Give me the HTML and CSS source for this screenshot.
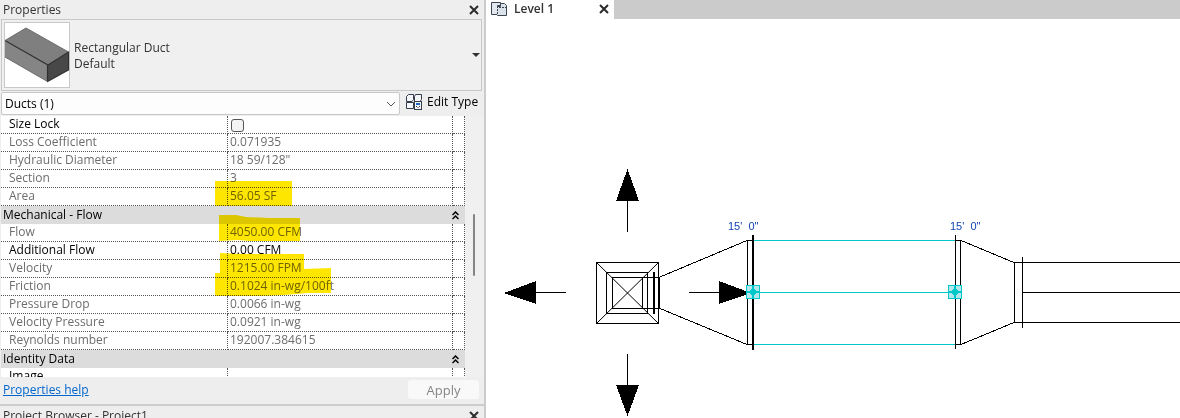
FILE: index.html
```
<!DOCTYPE html>
<html lang="en">
<head>
<meta charset="utf-8">
<title>Level 1 - Properties</title>
<link rel="stylesheet" href="styles.css">
</head>
<body>
<div class="app">
  <aside class="dock">
    <section class="properties">
      <header class="titlebar">
        <h2 class="title">Properties</h2>
        <button class="close" type="button" aria-label="Close Properties"><svg width="10" height="10" viewBox="0 0 10 10"><path class="cross" d="M1 1L9 9M9 1L1 9"/></svg></button>
      </header>

      <button class="type-selector" type="button">
        <svg class="thumb" width="66" height="66" viewBox="0 0 66 66" aria-hidden="true">
          <rect x="0.500" y="0.500" width="65" height="65" fill="#fff" stroke="#c8c8c8"/>
          <path fill="#7f7f7f" d="M22 6L64.500 30L44 43L1 18.500Z"/>
          <path fill="#858585" d="M1 18.500L44 43L43.500 59.500L1 35Z"/>
          <path fill="#484848" d="M44 43L64.500 30V48L43.500 59.500Z"/>
          <path fill="none" stroke="#303030" stroke-width="1.200" d="M1 18.500L44 43L64.500 30V48L43.500 59.500V43"/>
          <path fill="none" stroke="#6d6d6d" d="M1 18.500L22 6L64.500 30M1 35L43.500 59.500"/>
        </svg>
        <span class="type-name">Rectangular Duct<br>Default</span>
        <svg class="type-arrow" width="8" height="4" viewBox="0 0 8 4"><path fill="#333" d="M0 0H8L4 4Z"/></svg>
      </button>

      <div class="filter">
        <select class="category" aria-label="Category"><option>Ducts (1)</option></select>
        <button class="edit-type" type="button">
          <svg width="16" height="16" viewBox="0 0 16 16" aria-hidden="true">
            <g fill="#f4f6f9" stroke="#343b4b">
              <path d="M2.500 .5H7.500V5.500L6 7.500H.5V2.500ZM9.500 .5H15.500V5.500L14 7.500H8.500V2.500ZM.5 8.500H7.500V14.500H.5Z"/>
              <rect x="8.500" y="7.500" width="7" height="8"/>
            </g>
            <path fill="#1769c2" d="M10 9H14V11H10Z"/>
            <path fill="#343b4b" d="M10 12H11V13H10ZM13 12H14V13H13ZM11.500 13H12.500V14H11.500Z"/>
          </svg>
          <span>Edit Type</span>
        </button>
      </div>

      <div class="grid-area">
        <div class="grid-view">
          <table class="grid">
            <colgroup><col class="col-name"><col class="col-value"><col class="col-link"></colgroup>
            <tbody>
              <tr class="editable"><th scope="row"><label for="size-lock">Size Lock</label></th><td><input class="tick" type="checkbox" id="size-lock"></td><td></td></tr>
              <tr><th scope="row">Loss Coefficient</th><td>0.071935</td><td></td></tr>
              <tr><th scope="row">Hydraulic Diameter</th><td>18 59/128"</td><td></td></tr>
              <tr><th scope="row">Section</th><td>3</td><td></td></tr>
              <tr><th scope="row">Area</th><td>56.05 SF</td><td></td></tr>
              <tr class="group"><th colspan="3" scope="rowgroup"><div class="group-head">Mechanical - Flow<button class="fold" type="button" aria-label="Collapse Mechanical - Flow"><svg width="7" height="9" viewBox="0 0 7 9"><path class="chevrons" d="M.5 4L3.500 1L6.500 4M.5 8L3.500 5L6.500 8"/></svg></button></div></th></tr>
              <tr><th scope="row">Flow</th><td>4050.00 CFM</td><td></td></tr>
              <tr class="editable"><th scope="row">Additional Flow</th><td>0.00 CFM</td><td></td></tr>
              <tr><th scope="row">Velocity</th><td>1215.00 FPM</td><td></td></tr>
              <tr><th scope="row">Friction</th><td>0.1024 in-wg/100ft</td><td></td></tr>
              <tr><th scope="row">Pressure Drop</th><td>0.0066 in-wg</td><td></td></tr>
              <tr><th scope="row">Velocity Pressure</th><td>0.0921 in-wg</td><td></td></tr>
              <tr><th scope="row">Reynolds number</th><td>192007.384615</td><td></td></tr>
              <tr class="group"><th colspan="3" scope="rowgroup"><div class="group-head">Identity Data<button class="fold" type="button" aria-label="Collapse Identity Data"><svg width="7" height="9" viewBox="0 0 7 9"><path class="chevrons" d="M.5 4L3.500 1L6.500 4M.5 8L3.500 5L6.500 8"/></svg></button></div></th></tr>
              <tr class="editable"><th scope="row">Image</th><td></td><td></td></tr>
            </tbody>
          </table>
          <svg class="marker" width="464" height="261" viewBox="1 116 464 261" aria-hidden="true">
            <path d="M215 181H292V206H215Z"/>
            <path d="M219 215H236L246 217L270 218H300V241H250L238 240L219 241Z"/>
            <path d="M220 253L244 254H304V269L331 268V293H308L284 295L262 296H215V273H220Z"/>
          </svg>
        </div>
        <div class="scroll"><div class="scroll-thumb"></div></div>
      </div>

      <footer class="actions">
        <a class="help" href="#help">Properties help</a>
        <button class="apply" type="button" disabled>Apply</button>
      </footer>
    </section>

    <section class="browser">
      <header class="titlebar">
        <h2 class="title">Project Browser - Project1</h2>
        <button class="close" type="button" aria-label="Close Project Browser"><svg width="10" height="10" viewBox="0 0 10 10"><path class="cross" d="M1 1L9 9M9 1L1 9"/></svg></button>
      </header>
    </section>
  </aside>

  <main class="workspace">
    <nav class="tabs">
      <div class="tab">
        <svg width="16" height="14" viewBox="0 0 16 14" aria-hidden="true">
          <path fill="#e3e8ef" stroke="#3c4351" d="M.5 .5H9.500V3.500H6.500V12.500H.5Z"/>
          <path fill="#dce2ea" stroke="#3c4351" d="M6.500 13.500V4.500H9.500V1.500H13.500L15.500 3.500V13.500Z"/>
          <path fill="none" stroke="#dce2ea" d="M6.500 5V13"/>
          <path fill="none" stroke="#3c4351" stroke-dasharray="2 1" d="M6.500 4V13M8 5.500H15"/>
        </svg>
        <button class="tab-name" type="button">Level 1</button>
        <button class="close" type="button" aria-label="Close Level 1"><svg width="10" height="10" viewBox="0 0 10 10"><path class="cross" d="M1 1L9 9M9 1L1 9"/></svg></button>
      </div>
    </nav>
    <div class="view">
      <svg class="plan" width="694" height="399" viewBox="486 19 694 399" role="img" aria-label="Duct plan">
        <g class="solid">
          <path d="M627.500 169L639 201H616Z"/>
          <path d="M504 293L536 281V304Z"/>
          <path d="M627.500 416L616 385H639Z"/>
          <path d="M751 293L719 281V304Z"/>
        </g>
        <g class="line">
          <path d="M627.500 200V232M536 292.500H566M627.500 354V386M689 292.500H720"/>
          <path d="M596.500 262.500H658.500V323.500H596.500ZM606.500 272.500H647.500V313.500H606.500ZM612.500 277.500H642.500V308.500H612.500Z"/>
          <path class="diagonal" d="M596.500 262.500L658.500 323.500M658.500 262.500L596.500 323.500"/>
          <path d="M642 277.500H659.500V308.500H642"/>
          <path d="M660 277L747 240.500M660 308.500L747 344.500"/>
          <path d="M753 240.500H747.500V344.500H753"/>
          <path d="M955.500 235V349M955 240.500H960.500V344.500H955"/>
          <path d="M961 240.500L1014 262.500M961 344.500L1014 322.500"/>
          <path d="M4000 262.500H1014.500V322.500H4000M1022.500 257V328M1022 292.500H4000"/>
        </g>
        <path class="line heavy" d="M654 272V314M753 235V350"/>
        <path class="duct" d="M754 240.500H955M754 292.500H955M754 344.500H955"/>
        <g class="node">
          <rect x="746.500" y="285.500" width="13" height="13"/>
          <path d="M753 286V298M747 292H759"/>
          <path class="dot" d="M751 289H755V290H756V294H755V295H751V294H750V290H751Z"/>
        </g>
        <g class="node">
          <rect x="948.500" y="285.500" width="13" height="13"/>
          <path d="M955 286V298M949 292H961"/>
          <path class="dot" d="M953 289H957V290H958V294H957V295H953V294H952V290H953Z"/>
        </g>
        <text class="dim" x="728" y="230">15'&#160; 0"</text>
        <text class="dim" x="950" y="230">15'&#160; 0"</text>
      </svg>
    </div>
  </main>
</div>
</body>
</html>
```
FILE: styles.css
```
* { box-sizing: border-box; }

body {
  margin: 0;
  font: 12px/16px "Open Sans", "Noto Sans", sans-serif;
  color: #000;
}

button {
  margin: 0;
  padding: 0;
  border: 0;
  background: none;
  font: inherit;
  color: inherit;
}

svg { display: block; }

.app {
  display: flex;
  height: 100vh;
  overflow: hidden;
}

.dock {
  display: flex;
  flex-direction: column;
  flex: 0 0 486px;
  border-right: 2px solid #ccc;
  background: #eee;
}

.properties {
  display: flex;
  flex-direction: column;
  flex: 1;
  min-height: 0;
}

.browser {
  flex: 0 0 14px;
  overflow: hidden;
  border-top: 2px solid #ccc;
}

.titlebar {
  display: flex;
  flex: none;
  align-items: center;
  justify-content: space-between;
  height: 19px;
  padding: 0 5px 0 3px;
}

.title {
  margin: 0;
  font-size: 12px;
  font-weight: 400;
  color: #333;
}

.cross {
  fill: none;
  stroke: #2b2b2b;
  stroke-width: 2;
}

.type-selector {
  display: flex;
  flex: none;
  align-items: center;
  gap: 4px;
  height: 72px;
  margin: 0 2px 0 1px;
  padding: 0 1px 0 2px;
  border: 1px solid #c8c8c8;
  background: #f0f0f0;
  text-align: left;
}

.type-name {
  flex: 1;
  padding-top: 2px;
  color: #333;
}

.filter {
  display: flex;
  flex: none;
  gap: 6px;
  height: 25px;
  padding: 1px 0 0 1px;
}

.category {
  flex: 0 0 399px;
  height: 23px;
  padding: 0 3px;
  border: 1px solid #c8c8c8;
  border-radius: 2px;
  appearance: none;
  background: #fdfdfd url("data:image/svg+xml,%3Csvg xmlns='http://www.w3.org/2000/svg' width='10' height='6'%3E%3Cpath d='M1 1L5 5L9 1' fill='none' stroke='%23555'/%3E%3C/svg%3E") no-repeat right 3px center;
  font: inherit;
  color: #000;
}

.edit-type {
  display: flex;
  align-items: center;
  gap: 5px;
  height: 20px;
}

.grid-area {
  display: flex;
  flex: 1;
  min-height: 0;
  padding-left: 1px;
}

.grid-view {
  position: relative;
  flex: 1;
  overflow: hidden;
  background: #fff;
}

.grid {
  width: 100%;
  border-spacing: 0;
  table-layout: fixed;
  color: #6d6d6d;
}

.col-value { width: 225px; }
.col-link { width: 12px; }

.grid th,
.grid td {
  height: 18px;
  padding: 0 0 1px 2px;
  border-right: 1px dotted #555;
  border-bottom: 1px dotted #555;
  font-weight: 400;
  line-height: 16px;
  text-align: left;
  white-space: nowrap;
}

.grid th { padding-left: 8px; }
.grid .editable { color: #000; }

.grid .group th {
  padding: 0 6px 0 2px;
  border: 0;
  background: #dcdcdc;
  line-height: 18px;
  color: #000;
}

.group-head {
  display: flex;
  align-items: center;
  justify-content: space-between;
  height: 18px;
}

.chevrons {
  fill: none;
  stroke: #000;
  stroke-width: 1.5;
}

.tick {
  display: block;
  width: 13px;
  height: 13px;
  margin: 3px 0 0 1px;
  border: 1px solid #555;
  border-radius: 3px;
  appearance: none;
  background: #f3f3f3;
}

.marker {
  position: absolute;
  top: 0;
  left: 0;
  fill: #ffe600;
  mix-blend-mode: multiply;
  pointer-events: none;
}

.scroll {
  flex: 0 0 19px;
  padding: 98px 0 0 8px;
  background: #f0f0f0;
}

.scroll-thumb {
  width: 2px;
  height: 62px;
  border-radius: 1px;
  background: #858585;
}

.actions {
  display: flex;
  flex: none;
  align-items: center;
  justify-content: space-between;
  height: 27px;
  padding: 0 5px 2px 3px;
}

.help { color: #0066cc; }

.apply {
  width: 71px;
  height: 19px;
  border-radius: 3px;
  background: #f9f9f9;
  font-size: 13px;
  color: #858585;
}

.workspace {
  display: flex;
  flex-direction: column;
  flex: 1;
  min-width: 0;
  background: #fff;
}

.tabs {
  display: flex;
  flex: none;
  height: 19px;
  background: #cbcbcb;
}

.tab {
  display: flex;
  align-items: center;
  gap: 7px;
  width: 128px;
  padding: 0 5px 1px;
  background: #fff;
}

.tab-name {
  flex: 1;
  font-weight: 600;
  text-align: left;
  color: #333;
}

.view {
  flex: 1;
  min-height: 0;
  overflow: hidden;
}

.plan {
  overflow: visible;
  shape-rendering: crispEdges;
}

.line {
  fill: none;
  stroke: #000;
}

.diagonal { shape-rendering: geometricPrecision; }

.heavy { stroke-width: 2; }

.duct {
  fill: none;
  stroke: #00c8c8;
}

.node rect {
  fill: #b4e6ee;
  stroke: #00c8c8;
}

.node path {
  stroke: #00c8c8;
  stroke-width: 2;
}

.node .dot {
  fill: #00c8c8;
  stroke: none;
}

.dim {
  font: 11px "Liberation Sans", Arial, sans-serif;
  fill: #1446b4;
}
```
